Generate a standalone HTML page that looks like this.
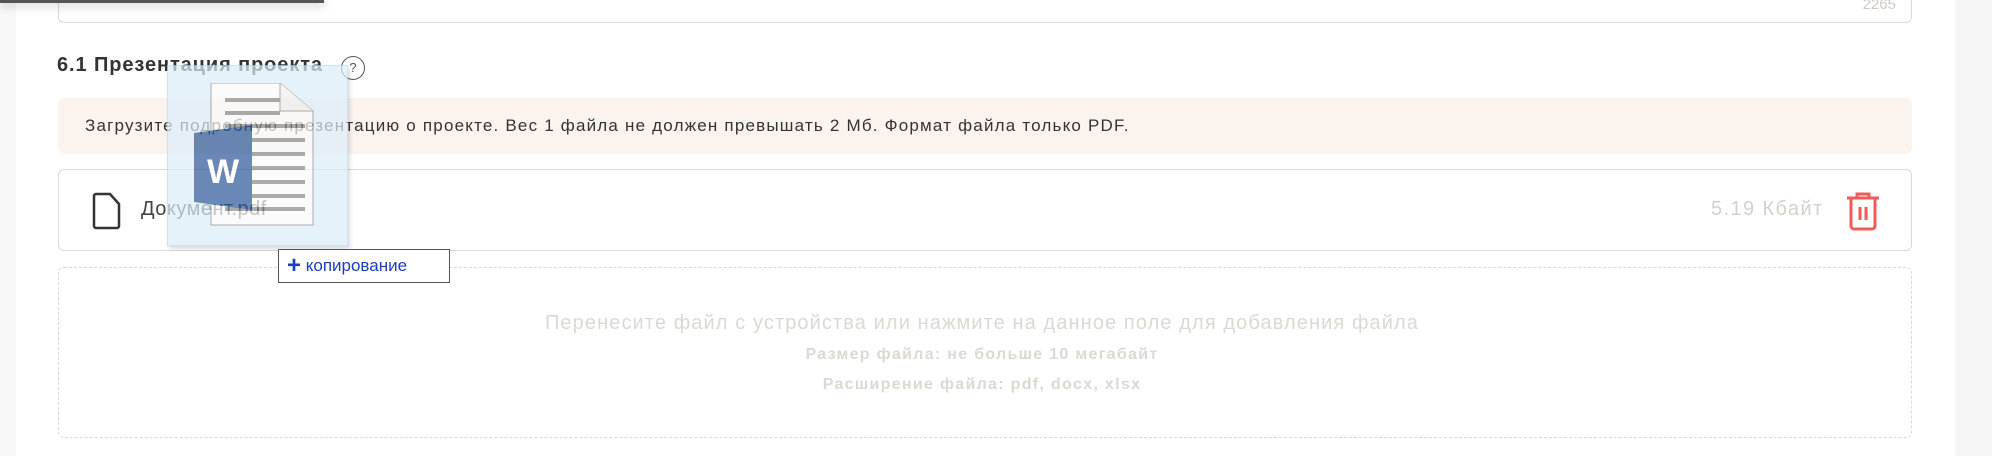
<!DOCTYPE html>
<html><head><meta charset="utf-8"><style>
*{margin:0;padding:0;box-sizing:border-box}
body{width:1992px;height:456px;overflow:hidden;background:#fff;font-family:"Liberation Sans",sans-serif;position:relative}
.a{position:absolute}
.t{white-space:nowrap}
</style></head><body>
<div class="a" style="left:0;top:0;width:16px;height:456px;background:#f8f8f8"></div>
<div class="a" style="left:1955px;top:0;width:37px;height:456px;background:#f5f5f5"></div>
<div class="a" style="left:58px;top:-12px;width:1854px;height:35px;border:1.5px solid #dcd8d4;border-radius:6px"></div>
<div class="a t" style="right:96px;top:-4px;font-size:15px;color:#cfcac4">2265</div>
<div class="a" style="left:0;top:0;width:324px;height:3px;background:#555;box-shadow:0 2px 10px rgba(0,0,0,.35)"></div>

<div class="a t" style="left:57px;top:54px;font-size:20px;font-weight:bold;color:#333;letter-spacing:0.9px">6.1 Презентация проекта</div>
<div class="a" style="left:341px;top:56px;width:24px;height:24px;border:1.5px solid #555;border-radius:50%;font-size:13px;color:#555;text-align:center;line-height:21px">?</div>

<div class="a" style="left:58px;top:98px;width:1854px;height:56px;background:#fbf4ee;border-radius:6px"></div>
<div class="a t" style="left:85px;top:116px;font-size:17px;color:#333;letter-spacing:1.2px">Загрузите подробную презентацию о проекте. Вес 1 файла не должен превышать 2 Мб. Формат файла только PDF.</div>

<div class="a" style="left:58px;top:169px;width:1854px;height:82px;border:1.5px solid #dcd8d4;border-radius:6px"></div>
<svg class="a" style="left:92px;top:192px" width="30" height="38" viewBox="0 0 30 38"><path d="M4 2h14l9 10v22a2 2 0 0 1-2 2H4a2 2 0 0 1-2-2V4a2 2 0 0 1 2-2z" fill="none" stroke="#333" stroke-width="2.5"/></svg>
<div class="a t" style="left:141px;top:198px;font-size:20px;color:#444;letter-spacing:0.5px">Документ.pdf</div>
<div class="a t" style="left:1711px;top:198px;font-size:20px;color:#d6d0ca;letter-spacing:1.4px">5.19 Кбайт</div>
<svg class="a" style="left:1845px;top:191px" width="36" height="40" viewBox="0 0 36 40"><path d="M2 7h32M12 7V3h12v4M6 7v28a3 3 0 0 0 3 3h18a3 3 0 0 0 3-3V7M15 16v13M21 16v13" fill="none" stroke="#f25a5a" stroke-width="3"/></svg>

<div class="a" style="left:58px;top:267px;width:1854px;height:171px;border:1.5px dashed #dcd8d4;border-radius:6px"></div>
<div class="a t" style="left:0;width:1964px;text-align:center;top:312px;font-size:20px;color:#ddd8d2;letter-spacing:1.1px">Перенесите файл с устройства или нажмите на данное поле для добавления файла</div>
<div class="a t" style="left:0;width:1964px;text-align:center;top:346px;font-size:16px;font-weight:bold;color:#ddd8d2;letter-spacing:1.3px">Размер файла: не больше 10 мегабайт</div>
<div class="a t" style="left:0;width:1964px;text-align:center;top:376px;font-size:16px;font-weight:bold;color:#ddd8d2;letter-spacing:1.3px">Расширение файла: pdf, docx, xlsx</div>

<div class="a" style="left:167px;top:65px;width:181px;height:181px;opacity:.7">
<div class="a" style="left:0;top:0;width:181px;height:181px;background:#dcedf9;border:1px solid #bcd9ef;box-shadow:2px 3px 4px rgba(0,0,0,.2)"></div>
<svg class="a" style="left:27px;top:18px" width="130" height="145" viewBox="0 0 130 145">
<path d="M17 0h69l33 28v114H17z" fill="#fafafa" stroke="#888" stroke-width="1"/>
<path d="M86 0v28h33" fill="#eee" stroke="#888"/>
<g fill="#888"><rect x="31" y="15" width="55" height="4"/><rect x="31" y="28" width="55" height="4"/>
<rect x="31" y="41" width="80" height="4"/><rect x="31" y="55" width="80" height="4"/><rect x="31" y="69" width="80" height="4"/><rect x="31" y="83" width="80" height="4"/><rect x="31" y="97" width="80" height="4"/><rect x="31" y="111" width="80" height="4"/><rect x="31" y="124" width="80" height="4"/></g>
<path d="M0 50l58-8v85l-58-8z" fill="#2b579a"/>
<text x="29" y="100" font-family="Liberation Sans" font-size="34" font-weight="bold" fill="#fff" text-anchor="middle">W</text>
</svg>
</div>
<div class="a t" style="left:278px;top:249px;width:172px;height:34px;border:1px solid #555;background:#fff;font-size:17px;color:#1a3fbf;line-height:32px;padding-left:8px"><b style="font-size:24px;vertical-align:-2px">+</b> копирование</div>
</body></html>
